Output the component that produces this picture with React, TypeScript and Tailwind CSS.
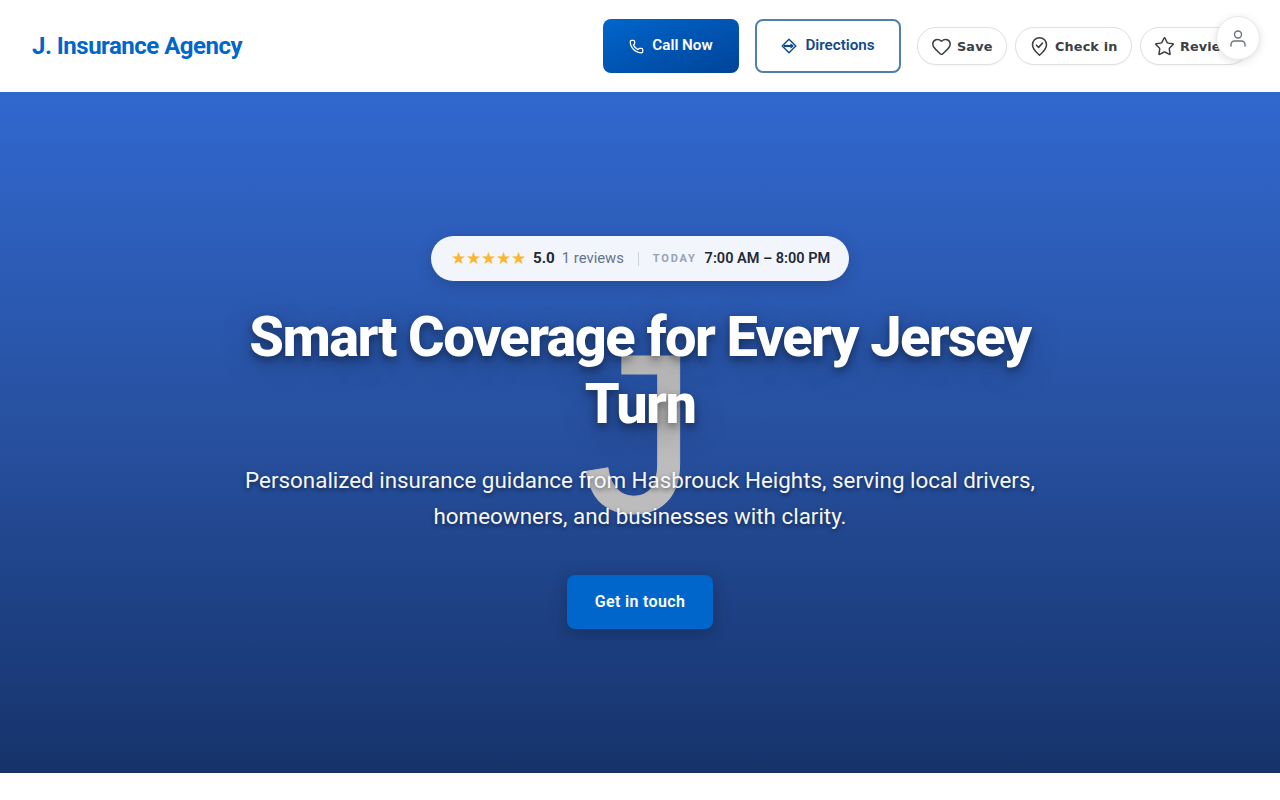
import { Heart, Phone, Star } from "lucide-react";

const roboto = "font-['Roboto',sans-serif]";

function Diamond() {
  return (
    <svg width="16" height="16" viewBox="0 0 16 16" fill="none" stroke="currentColor" strokeWidth="1.4" strokeLinejoin="round">
      <path d="M8 1.200 14.800 8 8 14.800 1.200 8Z" />
      <path d="M3 8h8.500" strokeWidth="2.200" />
      <path d="m9.500 5.800 2.500 2.200-2.500 2.200" strokeWidth="1.100" />
    </svg>
  );
}

function PinCheck() {
  return (
    <svg width="21" height="21" viewBox="0 0 24 24" fill="none" stroke="currentColor" strokeWidth="1.800" strokeLinecap="round" strokeLinejoin="round">
      <path d="M12 22c-1-1-8-6.500-8-12a8 8 0 0 1 16 0c0 5.500-7 11-8 12Z" />
      <path d="m8.500 10.500 2.500 2.500 4.500-5" />
    </svg>
  );
}

function UserIcon() {
  return (
    <svg width="16" height="17" viewBox="0 0 16 17" fill="none" stroke="currentColor" strokeWidth="1.400" strokeLinecap="round">
      <circle cx="8" cy="4.500" r="3.500" />
      <path d="M1 16v-1.500a3.500 3.500 0 0 1 3.500-3.500h7a3.500 3.500 0 0 1 3.500 3.500V16" />
    </svg>
  );
}

function Pill({ icon, label, width }: { icon: React.ReactNode; label: string; width: string }) {
  return (
    <button className={`flex h-[38px] items-center gap-[5px] whitespace-nowrap rounded-full border border-[#e0e0e0] bg-white px-[13px] font-['DejaVu_Sans',sans-serif] text-[12.8px] font-bold tracking-[0.15px] text-[#3c4043] shadow-[0_1px_2px_rgba(0,0,0,0.04)] ${width}`}>
      {icon}
      <span className="mt-px">{label}</span>
    </button>
  );
}

export default function App() {
  return (
    <div className={`min-h-[800px] bg-white ${roboto}`}>
      <header className="relative z-10 flex h-[92px] items-center justify-between bg-white px-8">
        <div className="text-[24px] font-bold tracking-[-0.5px] text-[#0066cc]">J. Insurance Agency</div>
        <div className="flex items-center gap-4">
          <button className="flex h-[54px] w-[136px] items-center justify-center gap-2 rounded-lg bg-gradient-to-br from-[#0066cc] to-[#004499] text-[15.2px] font-semibold text-white">
            <Phone size={15} strokeWidth={2} className="mt-px" />
            <span className="-mt-[2px]">Call Now</span>
          </button>
          <button className="flex h-[54px] w-[146px] items-center justify-center gap-2 rounded-lg border-2 border-[#4f7fae] bg-white text-[15.2px] font-semibold text-[#0d4a8f]">
            <Diamond />
            <span className="-mt-[2px]">Directions</span>
          </button>
          <div className="flex items-center gap-2">
            <Pill width="w-[90px]" icon={<Heart size={21} strokeWidth={1.7} />} label="Save" />
            <Pill width="w-[117px]" icon={<PinCheck />} label="Check in" />
            <Pill width="w-[108px]" icon={<Star size={21} strokeWidth={1.7} />} label="Review" />
          </div>
        </div>
        <div className="absolute right-5 top-4 flex h-11 w-11 items-center justify-center rounded-full border border-[#e8e8e8] bg-white text-[#6b7280] shadow-[0_2px_8px_rgba(0,0,0,0.12)]">
          <UserIcon />
        </div>
      </header>

      <main className="relative flex h-[681px] flex-col items-center overflow-hidden border-b border-[#1c3158] bg-gradient-to-b from-[#3168cf] via-[#27509f] to-[#16336b] pt-[144px]">
        <div aria-hidden className="absolute left-[566px] top-[240px] font-['Liberation_Mono',monospace] text-[236px] leading-[236px] text-[#bcbcbc] [-webkit-text-stroke:1px_#bcbcbc]">J</div>

        <div className="relative flex h-[45px] w-[418px] items-center rounded-full bg-[#f2f5fb] pl-5 shadow-[0_4px_16px_rgba(0,0,0,0.16)]">
          <span className="text-[17px] leading-none text-[#fbb62d]">★★★★★</span>
          <span className="ml-[7px] text-[15.2px] font-bold text-[#1f2937]">5.0</span>
          <span className="ml-[7px] text-[14.8px] text-[#64748b]">1 reviews</span>
          <span className="mx-[14px] h-[14px] w-px bg-[#cbd5e1]" />
          <span className="mt-px text-[11px] font-bold tracking-[1.8px] text-[#94a3b8]">TODAY</span>
          <span className="ml-2 text-[14.5px] font-semibold text-[#1f2937]">7:00 AM – 8:00 PM</span>
        </div>

        <h1 className="relative mt-[23px] w-[800px] text-center text-[56px] leading-[67px] font-extrabold tracking-[-1.6px] text-white [text-shadow:0_4px_8px_rgba(0,0,0,0.4),0_8px_32px_rgba(0,0,0,0.25)]">
          Smart Coverage for Every Jersey Turn
        </h1>
        <p className="relative mt-6 w-[800px] text-center text-[22.4px] leading-[36px] text-[#f5f7fc] [text-shadow:0_2px_4px_rgba(0,0,0,0.5)]">
          Personalized insurance guidance from Hasbrouck Heights, serving local drivers, homeowners, and businesses with clarity.
        </p>
        <button className="relative mt-[41px] h-[54px] w-[146px] rounded-lg bg-[#0066cc] text-[16px] font-semibold tracking-[0.35px] text-white shadow-[0_4px_16px_rgba(0,0,0,0.25)]">
          Get in touch
        </button>
      </main>
    </div>
  );
}
